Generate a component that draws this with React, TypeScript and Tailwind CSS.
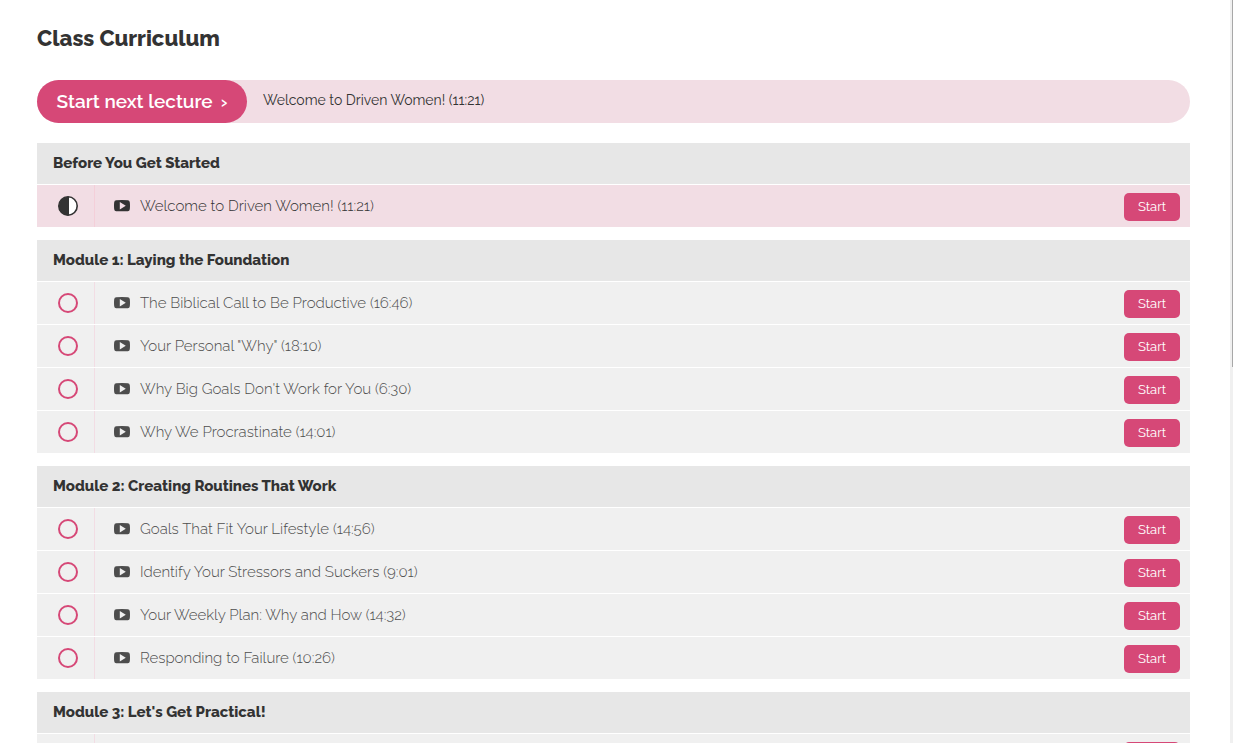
type Lecture = {
  title: string;
  started?: boolean;
};

type Section = {
  name: string;
  lectures: Lecture[];
};

const nextLecture = "Welcome to Driven Women! (11:21)";

const sections: Section[] = [
  {
    name: "Before You Get Started",
    lectures: [{ title: nextLecture, started: true }],
  },
  {
    name: "Module 1: Laying the Foundation",
    lectures: [
      { title: "The Biblical Call to Be Productive (16:46)" },
      { title: 'Your Personal "Why" (18:10)' },
      { title: "Why Big Goals Don't Work for You (6:30)" },
      { title: "Why We Procrastinate (14:01)" },
    ],
  },
  {
    name: "Module 2: Creating Routines That Work",
    lectures: [
      { title: "Goals That Fit Your Lifestyle (14:56)" },
      { title: "Identify Your Stressors and Suckers (9:01)" },
      { title: "Your Weekly Plan: Why and How (14:32)" },
      { title: "Responding to Failure (10:26)" },
    ],
  },
  {
    name: "Module 3: Let's Get Practical!",
    lectures: [{ title: "" }],
  },
];

function StatusIcon({ started }: { started?: boolean }) {
  if (started) {
    return (
      <svg viewBox="0 0 20 20" className="size-5" aria-hidden="true">
        <circle cx="10" cy="10" r="9.2" fill="#fff" stroke="#333" strokeWidth="1.6" />
        <path d="M11 0.8H10A9.2 9.2 0 1 0 10 19.2H11Z" fill="#333" />
      </svg>
    );
  }

  return (
    <svg viewBox="0 0 20 20" className="size-5" aria-hidden="true">
      <circle cx="10" cy="10" r="9" fill="none" stroke="#d64877" strokeWidth="2" />
    </svg>
  );
}

function VideoIcon() {
  return (
    <svg viewBox="0 0 16 12" className="h-3 w-4 shrink-0" fill="currentColor" aria-hidden="true">
      <path
        fillRule="evenodd"
        d="M2.2 0.2Q8 -0.1 13.8 0.2Q15.6 0.4 15.8 2.2Q16.2 5.7 15.8 9.2Q15.6 11 13.8 11.2Q8 11.5 2.2 11.2Q0.4 11 0.2 9.2Q-0.2 5.7 0.2 2.2Q0.4 0.4 2.2 0.2ZM5.8 2V9.4L11.8 5.7Z"
      />
    </svg>
  );
}

function LectureRow({ title, started }: Lecture) {
  return (
    <li
      className={
        started
          ? "flex h-[43px] border-t border-white bg-[#f2dde4] text-[#333]"
          : "flex h-[43px] border-t border-white bg-[#f0f0f0] text-[#4d4d4d]"
      }
    >
      <div
        className={
          started
            ? "flex w-[58px] items-center justify-center border-r border-[#f4cfd9] pl-1"
            : "flex w-[58px] items-center justify-center border-r border-[#f2dde4] pl-1"
        }
      >
        <StatusIcon started={started} />
      </div>
      <a href="#" className="flex flex-1 items-center gap-[10px] pb-px pl-[19px] text-[15px] font-light">
        <VideoIcon />
        <span className="pt-0.5">{title}</span>
      </a>
      <button
        type="button"
        className="mt-2 mr-[10px] h-7 w-14 rounded-[5px] bg-[#d64877] text-[13px] text-white"
      >
        Start
      </button>
    </li>
  );
}

export default function App() {
  return (
    <div className="flex h-screen overflow-hidden bg-white font-['Raleway','Lato',sans-serif] text-[#333]">
      <main className="flex-1 pt-6 pr-10 pl-[37px]">
        <h1 className="text-[22px] leading-7 font-extrabold">Class Curriculum</h1>

        <div className="mt-7 flex h-[43px] items-center rounded-full bg-[#f2dde4]">
          <button
            type="button"
            className="flex h-full w-[210px] items-center justify-center gap-2 rounded-full bg-[#d64877] text-[19px] font-semibold text-white"
          >
            Start next lecture <span>›</span>
          </button>
          <span className="pb-0.5 pl-4 text-[14px]">{nextLecture}</span>
        </div>

        <div className="mt-5 flex flex-col gap-[13px]">
          {sections.map((section) => (
            <section key={section.name}>
              <h2 className="flex h-[41px] items-center bg-[#e7e7e7] pb-px pl-4 text-[15px] font-extrabold">
                {section.name}
              </h2>
              <ul>
                {section.lectures.map((lecture) => (
                  <LectureRow key={lecture.title} {...lecture} />
                ))}
              </ul>
            </section>
          ))}
        </div>
      </main>

      {/* scroll track */}
      <div className="flex w-[3px] justify-end bg-[#f0f0f0]">
        <div className="h-[49.4%] w-px bg-[#a8a8a8]" />
      </div>
    </div>
  );
}
